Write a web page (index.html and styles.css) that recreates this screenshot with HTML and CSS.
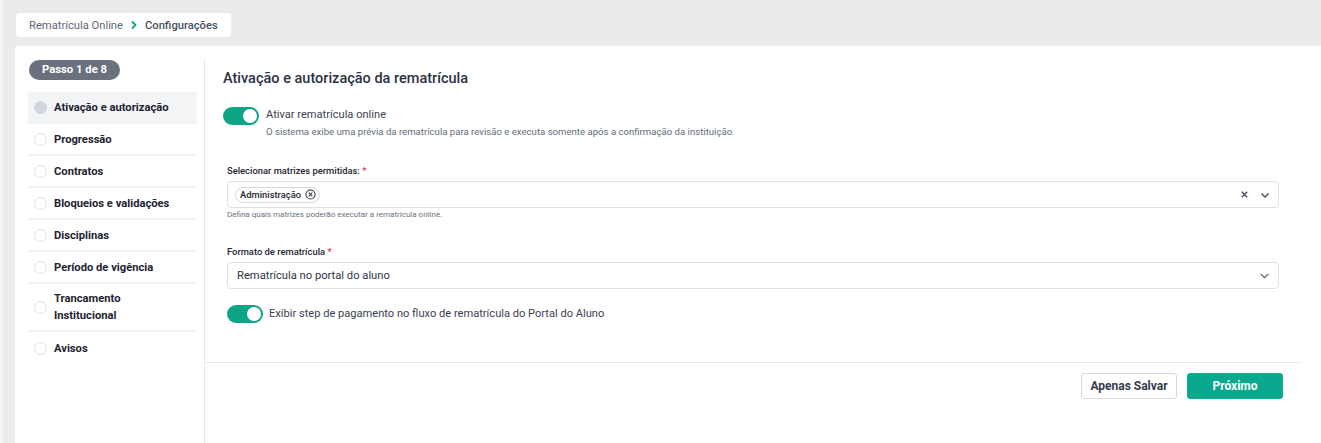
FILE: index.html
```html
<!DOCTYPE html>
<html lang="pt-BR">
<head>
    <meta charset="UTF-8">
    <meta name="viewport" content="width=device-width, initial-scale=1.0">
    <title>Configurações - Rematrícula Online</title>
    <link rel="stylesheet" href="styles.css">
</head>
<body>
    <div class="page">
        <nav class="breadcrumb">
            <span>Rematrícula Online</span>
            <svg class="crumb-sep" width="10" height="10" viewBox="0 0 10 10"><polyline points="3,1.5 6.5,5 3,8.5" fill="none" stroke="#12a389" stroke-width="1.8"/></svg>
            <span class="crumb-current">Configurações</span>
        </nav>

        <div class="card">
            <aside class="steps">
                <div class="step-badge">Passo 1 de 8</div>
                <ul class="step-list">
                    <li class="step active"><span class="dot"></span>Ativação e autorização</li>
                    <li class="step"><span class="dot"></span>Progressão</li>
                    <li class="step"><span class="dot"></span>Contratos</li>
                    <li class="step"><span class="dot"></span>Bloqueios e validações</li>
                    <li class="step"><span class="dot"></span>Disciplinas</li>
                    <li class="step"><span class="dot"></span>Período de vigência</li>
                    <li class="step"><span class="dot"></span>Trancamento<br>Institucional</li>
                    <li class="step last"><span class="dot"></span>Avisos</li>
                </ul>
            </aside>

            <main class="content">
                <section class="form">
                    <h1 class="title">Ativação e autorização da rematrícula</h1>

                    <div class="switch-row">
                        <span class="switch on"></span>
                        <div>
                            <div class="switch-label">Ativar rematrícula online</div>
                            <div class="switch-help">O sistema exibe uma prévia da rematrícula para revisão e executa somente após a confirmação da instituição.</div>
                        </div>
                    </div>

                    <div class="field">
                        <label class="field-label">Selecionar matrizes permitidas: <span class="req">*</span></label>
                        <div class="select">
                            <span class="chip">Administração
                                <svg width="11" height="11" viewBox="0 0 12 12"><circle cx="6" cy="6" r="5" fill="none" stroke="#2b3240" stroke-width="1.1"/><path d="M4 4l4 4M8 4l-4 4" stroke="#2b3240" stroke-width="1.1"/></svg>
                            </span>
                            <span class="select-icons">
                                <svg width="9" height="9" viewBox="0 0 10 10"><path d="M2 2l6 6M8 2l-6 6" stroke="#4b5262" stroke-width="1.6"/></svg>
                                <svg width="10" height="10" viewBox="0 0 10 10"><polyline points="1.5,3.5 5,7 8.5,3.5" fill="none" stroke="#4b5262" stroke-width="1.5"/></svg>
                            </span>
                        </div>
                        <div class="field-hint">Defina quais matrizes poderão executar a rematrícula online.</div>
                    </div>

                    <div class="field">
                        <label class="field-label">Formato de rematrícula <span class="req">*</span></label>
                        <div class="select">
                            <span class="select-value">Rematrícula no portal do aluno</span>
                            <span class="select-icons">
                                <svg width="11" height="11" viewBox="0 0 10 10"><polyline points="1.5,3.5 5,7 8.5,3.5" fill="none" stroke="#5b6272" stroke-width="1.1"/></svg>
                            </span>
                        </div>
                    </div>

                    <div class="switch-row inset">
                        <span class="switch on"></span>
                        <div class="switch-label">Exibir step de pagamento no fluxo de rematrícula do Portal do Aluno</div>
                    </div>
                </section>

                <footer class="actions">
                    <button class="btn btn-outline">Apenas Salvar</button>
                    <button class="btn btn-primary">Próximo</button>
                </footer>
            </main>
        </div>
    </div>
</body>
</html>
```

FILE: styles.css
```css
* {
    box-sizing: border-box;
}
html, body {
    height: 100%;
}
body {
    margin: 0;
    background: #ebebeb;
    font-family: Roboto, "Liberation Sans", Arial, sans-serif;
    color: #1f2533;
    overflow: hidden;
}
.page {
    height: 100%;
    border-left: 3px solid #f5f5f5;
    padding: 13px 0 0 12px;
    display: flex;
    flex-direction: column;
}

/* breadcrumb */
.breadcrumb {
    align-self: flex-start;
    display: flex;
    align-items: center;
    gap: 6px;
    height: 24px;
    margin-left: 1px;
    padding: 0 13px;
    background: #fff;
    border-radius: 4px;
    font-size: 11.2px;
    color: #5f6779;
}
.crumb-current {
    color: #485063;
    font-weight: 500;
}

/* card */
.card {
    flex: 1;
    display: flex;
    margin-top: 9px;
    background: #fff;
    border-top-left-radius: 4px;
}

/* steps sidebar */
.steps {
    width: 189px;
    padding: 12px 7px 0 13px;
}
.step-badge {
    display: inline-block;
    height: 20px;
    line-height: 20px;
    padding: 0 13px;
    margin-left: 1px;
    border-radius: 10px;
    background: #6b707e;
    color: #fff;
    font-size: 11.3px;
    font-weight: 700;
}
.step-list {
    list-style: none;
    margin: 12px 0 0;
    padding: 0;
}
.step {
    display: flex;
    align-items: center;
    gap: 7px;
    height: auto;
    min-height: 32px;
    padding: 6px 6px;
    border-bottom: 2px solid #f1f3f6;
    font-size: 11.2px;
    font-weight: 700;
    line-height: 17px;
    color: #1d2331;
}
.step.active {
    background: #f3f4f6;
}
.step.last {
    border-bottom: none;
}
.dot {
    flex: none;
    width: 13px;
    height: 13px;
    border-radius: 50%;
    border: 1px solid #dadfe6;
    background: #fff;
}
.step.active .dot {
    background: #cfd6e0;
    border-color: #cfd6e0;
}

/* main content */
.content {
    flex: 1;
    display: flex;
    flex-direction: column;
    margin-top: 12px;
    padding-right: 19px;
    border-left: 1px solid #e6e8ec;
}
.form {
    padding: 11px 23px 39px 18px;
}
.title {
    margin: 0;
    font-size: 14.5px;
    font-weight: 500;
    line-height: 20px;
    color: #2b3242;
}

.switch-row {
    display: flex;
    align-items: flex-start;
    gap: 7px;
    margin-top: 18px;
}
.switch-row.inset {
    margin-top: 16px;
    margin-left: 4px;
    gap: 6px;
    align-items: center;
}
.switch {
    flex: none;
    position: relative;
    width: 36px;
    height: 18px;
    border-radius: 9px;
    background: #0ea587;
}
.switch::after {
    content: "";
    position: absolute;
    top: 2px;
    right: 2px;
    width: 14px;
    height: 14px;
    border-radius: 50%;
    background: #fff;
}
.switch-label {
    font-size: 11.1px;
    line-height: 16px;
    color: #3b4252;
}
.switch-help {
    margin-top: 2px;
    font-size: 9.6px;
    line-height: 14px;
    color: #646b7b;
}

.field {
    margin-top: 25px;
    margin-left: 4px;
}
.field-label {
    display: block;
    font-size: 9.4px;
    font-weight: 500;
    line-height: 14px;
    color: #1f2533;
}
.req {
    color: #e0334d;
}
.select {
    display: flex;
    align-items: center;
    height: 27px;
    margin-top: 3px;
    padding: 0 8px 0 7px;
    border: 1px solid #dde1e8;
    border-radius: 4px;
}
.select-value {
    padding-left: 2px;
    font-size: 11.2px;
    color: #2f3646;
}
.select-icons {
    margin-left: auto;
    display: flex;
    align-items: center;
    gap: 11px;
}
.chip {
    display: inline-flex;
    align-items: center;
    gap: 4px;
    height: 16px;
    padding: 0 3px 0 4px;
    border: 1px solid #d4d8df;
    border-radius: 8px;
    font-size: 9.4px;
    font-weight: 500;
    color: #1f2533;
}
.field-hint {
    margin-top: 2px;
    font-size: 8px;
    line-height: 10px;
    color: #6b7280;
}

/* footer buttons */
.actions {
    display: flex;
    justify-content: flex-end;
    gap: 10px;
    padding: 10px 19px 0 0;
    border-top: 1px solid #e8eaee;
}
.btn {
    width: 96px;
    height: 26px;
    border-radius: 3px;
    font-family: inherit;
    font-size: 12px;
    font-weight: 700;
    cursor: pointer;
}
.btn-outline {
    background: #fff;
    border: 1px solid #d5d9e0;
    color: #343b4a;
}
.btn-primary {
    background: #0aa88e;
    border: 1px solid #0aa88e;
    color: #fff;
}
```
